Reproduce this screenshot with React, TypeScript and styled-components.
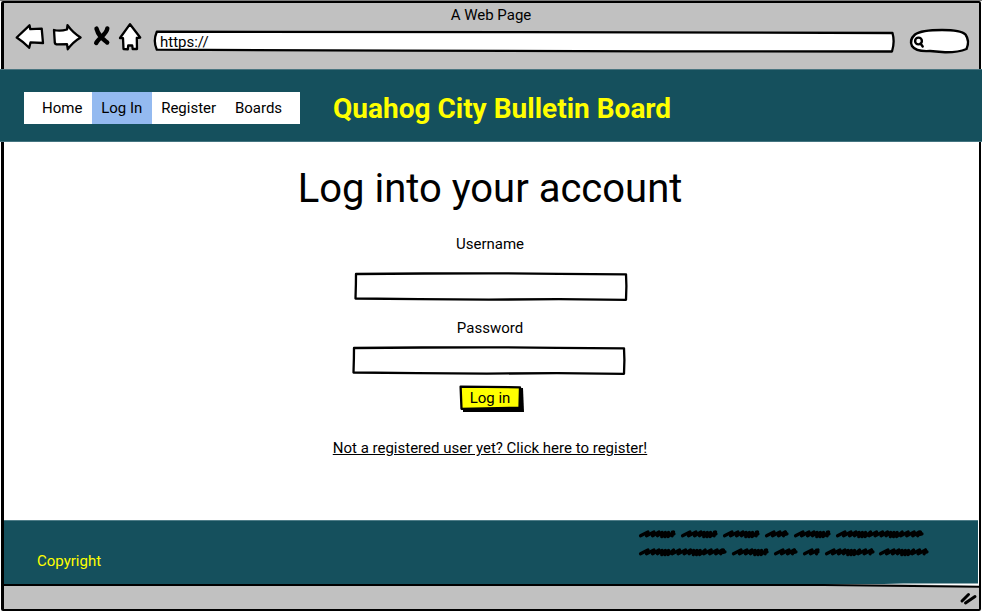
import React from "react";
import styled, { createGlobalStyle } from "styled-components";

const GlobalStyle = createGlobalStyle`
  * { box-sizing: border-box; }
  html, body { margin: 0; padding: 0; }
  body { background: #fff; overflow: hidden; font-family: Roboto, "Liberation Sans", sans-serif; font-size: 15px; color: #000; }
`;

const BrowserWindow = styled.div`
  width: 982px;
  height: 612px;
  padding: 0 1px 1px 1px;
  display: flex;
  flex-direction: column;
  border-top: 1px solid #7d7d7d;
`;

const Frame = styled.div`
  flex: 1;
  display: flex;
  flex-direction: column;
  border: 2px solid #000;
  border-left-width: 3px;
  border-radius: 2px;
`;

const Chrome = styled.div`
  height: 66px;
  background: #c1c1c1;
  display: flex;
  flex-direction: column;
`;

const WindowTitle = styled.div`
  height: 22px;
  padding-right: 1px;
  line-height: 25px;
  text-align: center;
`;

const Toolbar = styled.div`
  display: flex;
  align-items: flex-start;
  height: 40px;
  padding-left: 8px;
`;

const NavIcons = styled.svg`
  display: block;
  width: 134px;
  height: 40px;
  flex: none;
`;

const AddressBar = styled.div`
  display: grid;
  width: 744px;
  height: 24px;
  margin: 4px 0 0 6px;
  flex: none;
  > * { grid-area: 1 / 1; }
`;

const AddressText = styled.span`
  padding-left: 8px;
  line-height: 27px;
  z-index: 1;
`;

const SketchSvg = styled.svg`
  display: block;
  overflow: visible;
`;

const SearchBox = styled.div`
  margin: 2px 0 0 12px;
  flex: none;
`;

const Header = styled.header`
  height: 73px;
  margin: 0 -3px 0 -4px;
  padding-left: 24px;
  background: #15505d;
  display: flex;
  align-items: center;
  border-top: 1px solid #4a7580;
  border-bottom: 1px solid #437480;
  z-index: 1;
`;

const Menu = styled.nav`
  display: flex;
  width: 276px;
  height: 32px;
  margin-top: 6px;
  margin-bottom: 1px;
  padding-left: 8.7px;
  background: #fff;
`;

const MenuItem = styled.a<{ $active?: boolean }>`
  padding: 0 9.4px;
  line-height: 32px;
  white-space: nowrap;
  background: ${(p) => (p.$active ? "#94baf0" : "transparent")};
`;

const SiteTitle = styled.h1`
  margin: 7px 0 0 33px;
  font-size: 28px;
  line-height: 34px;
  font-weight: 700;
  color: #ff0;
`;

const Main = styled.main`
  height: 378px;
  padding-right: 3px;
  background: #fff;
  display: flex;
  flex-direction: column;
  align-items: center;
`;

const PageTitle = styled.h2`
  margin: 22px 0 0;
  font-size: 40px;
  line-height: 50px;
  font-weight: 400;
`;

const Label = styled.label<{ $top: number }>`
  margin-top: ${(p) => p.$top}px;
  height: 20px;
  line-height: 20px;
`;

const Field = styled.div<{ $top: number; $shift?: number }>`
  width: 274px;
  height: 30px;
  margin-top: ${(p) => p.$top}px;
  margin-left: ${(p) => p.$shift ?? 0}px;
`;

const LoginButton = styled.button`
  display: grid;
  width: 66px;
  height: 28px;
  margin: 9px 0 0 3px;
  padding: 0;
  border: 0;
  background: none;
  font: inherit;
  color: #000;
  > * { grid-area: 1 / 1; }
`;

const ButtonText = styled.span`
  z-index: 1;
  line-height: 26px;
  padding-right: 3px;
`;

const RegisterLink = styled.a`
  margin-top: 25px;
  line-height: 20px;
  text-decoration: underline;
`;

const Footer = styled.footer`
  height: 64px;
  margin-right: 1px;
  padding: 0 47px 0 33px;
  background: #15505d;
  border-top: 1px solid #4f7d88;
  display: flex;
  justify-content: space-between;
`;

const Copyright = styled.span`
  margin-top: 30px;
  line-height: 20px;
  color: #ff0;
`;

const StatusBar = styled.div`
  flex: 1;
  background: #c1c1c1;
`;

function SketchInput() {
  return (
    <SketchSvg width="274" height="30" fill="none" stroke="#000" strokeLinejoin="round" strokeLinecap="round">
      <path d="M2 2 L70 1.5 L135 1.3 L205 1.8 L272 2.3 L272.4 14 L272 27.8 L205 27.2 L135 27.6 L65 27.2 L1.5 26.5 L1.9 12 Z" fill="#fff" strokeWidth="2.3" />
    </SketchSvg>
  );
}

/* Each entry is [x, y, width] of one scribbled word. */
const scribbles: [number, number, number][] = [
  [0, 0, 37], [42, 0, 37], [84, 0, 37], [126, 0, 24], [155, 0, 37], [197, 0, 88],
  [0, 18, 88], [93, 18, 37], [135, 18, 24], [164, 18, 17], [186, 18, 50], [240, 18, 50],
];

const steps = [6, 6, 5, 3.2, 3.2, 3.2, 5];

function scribblePath(x: number, y: number, w: number) {
  let d = `M${x + 1.5} ${y + 6.8}`;
  let at = 0;
  for (let i = 0; at < w - 10; i++) {
    const step = steps[i % steps.length];
    const dense = step < 4;
    at += step;
    d += ` L${x + at + 3} ${y + (dense ? 3.4 : 3)} L${x + at + (dense ? 2.5 : 1.5)} ${y + (dense ? 7.6 : 6.8)}`;
  }
  return d + ` L${x + w - 3.5} ${y + 3} L${x + w - 4} ${y + 5.5} L${x + w - 2} ${y + 5}`;
}

export default function App() {
  return (
    <>
      <GlobalStyle />
      <BrowserWindow>
        <Frame>
          <Chrome>
            <WindowTitle>A Web Page</WindowTitle>
            <Toolbar>
              <NavIcons viewBox="12 25 134 40" overflow="visible" fill="#fff" stroke="#000" strokeWidth="2.3" strokeLinejoin="round" strokeLinecap="round">
                <path d="M16.7 37.5 L29.5 25.3 L30.3 29.2 L41.7 28.6 L43 43 L30.5 42.4 L29.2 47.8 Q23 41.5 16.7 37.5 Z" />
                <path d="M54 30 Q60 31.5 67 29.5 L67.5 25.2 Q73 33 80.6 37.5 Q73 42 67.8 49.2 L67 44.2 L56.5 44.4 Q54.5 44 54.7 41 Z" />
                <path d="M96.5 28.6 C98.5 36 102.5 38.5 107.2 42.5 M107.3 28.5 C106.5 34.5 98.5 38 96.2 43" fill="none" strokeWidth="4.4" />
                <path d="M130 24.2 L140.2 37.5 L136.8 38 L137 49 L132.7 49 L132.2 45.5 L128.2 45.5 L127.8 49.3 L123.5 49 L123 38.2 L120 38 Z" />
              </NavIcons>
              <AddressBar>
                <SketchSvg width="744" height="24" stroke="#000" strokeLinejoin="round" fill="#fff">
                  <path d="M4.8 2.7 L370 3.2 L740.5 4 Q743 13 740 22.5 L500 22.3 L250 21.6 L4.8 20.7 Q0.8 12 4.8 2.7 Z" strokeWidth="2.3" />
                </SketchSvg>
                <AddressText>https://</AddressText>
              </AddressBar>
              <SearchBox>
                <SketchSvg width="64" height="28" viewBox="908 27 64 28" fill="#fff" stroke="#000" strokeWidth="2.4" strokeLinejoin="round" strokeLinecap="round">
                  <path d="M915 34.5 Q921 30 942 30 Q961 30 965.5 34.5 Q970 41 966.5 49 Q958 52.5 945 52.3 L930 51 Q916 52 912 46 Q909 40 915 34.5 Z" />
                  <circle cx="918.5" cy="41" r="3.4" />
                  <path d="M920.5 43.5 L922.7 46.5" />
                </SketchSvg>
              </SearchBox>
            </Toolbar>
          </Chrome>
          <Header>
            <Menu>
              <MenuItem>Home</MenuItem>
              <MenuItem $active>Log In</MenuItem>
              <MenuItem>Register</MenuItem>
              <MenuItem>Boards</MenuItem>
            </Menu>
            <SiteTitle>Quahog City Bulletin Board</SiteTitle>
          </Header>
          <Main>
            <PageTitle>Log into your account</PageTitle>
            <Label $top={20}>Username</Label>
            <Field $top={18} $shift={1}><SketchInput /></Field>
            <Label $top={16}>Password</Label>
            <Field $top={8} $shift={-2}><SketchInput /></Field>
            <LoginButton>
              <SketchSvg width="66" height="28">
                <path d="M4 5 L64 3 L65 27 L4 27 Z" />
                <path d="M1.6 1.6 L61 2.3 L60.5 22.8 L2.5 23.8 Z" fill="#ff0" stroke="#000" strokeWidth="2.3" strokeLinejoin="round" />
              </SketchSvg>
              <ButtonText>Log in</ButtonText>
            </LoginButton>
            <RegisterLink>Not a registered user yet? Click here to register!</RegisterLink>
          </Main>
          <Footer>
            <Copyright>Copyright</Copyright>
            <SketchSvg width="292" height="40" viewBox="0 -8 292 40" fill="none" stroke="#000" strokeWidth="3.2" strokeLinecap="round" strokeLinejoin="round">
              {scribbles.map(([x, y, w], i) => <path key={i} d={scribblePath(x, y, w)} />)}
            </SketchSvg>
          </Footer>
          <StatusBar>
            <SketchSvg width="975" height="24" fill="none" stroke="#000" strokeWidth="2" strokeLinecap="round">
              <path d="M880 -0.5 L975 -0.5 L975 2 Z" fill="#fff" stroke="none" />
              <path d="M0 1 L820 1 L975 2.8" />
              <path d="M958 17 L964.5 10.5 M961.5 19 L971 12.5" strokeWidth="3" />
            </SketchSvg>
          </StatusBar>
        </Frame>
      </BrowserWindow>
    </>
  );
}
